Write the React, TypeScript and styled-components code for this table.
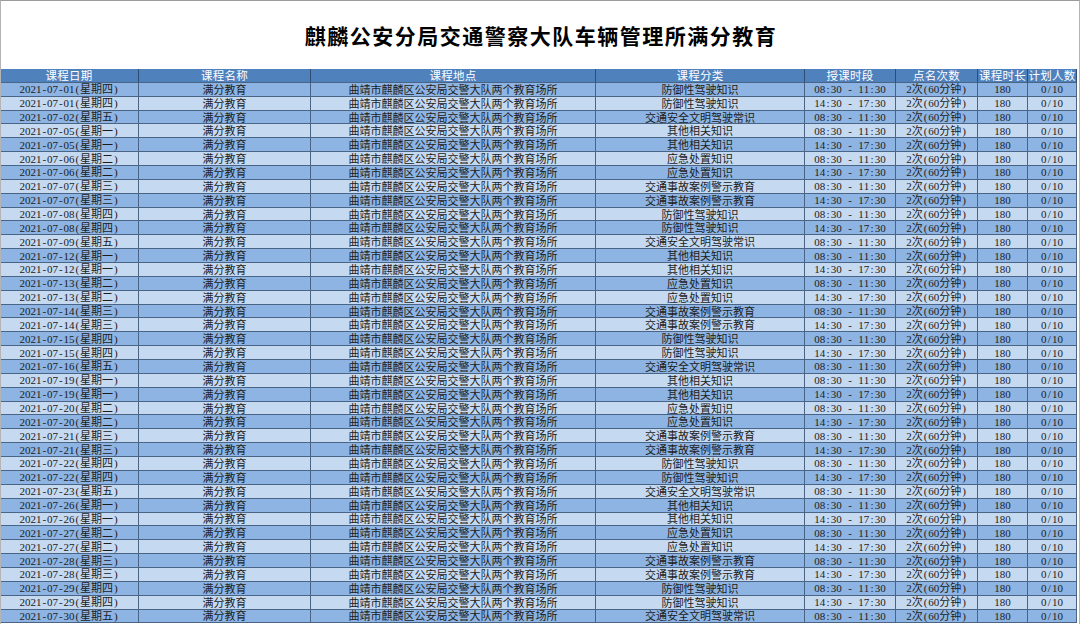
import React from "react";
import styled, { createGlobalStyle } from "styled-components";

const GlobalStyle = createGlobalStyle`
  html, body {
    margin: 0;
    padding: 0;
    background: #ffffff;
  }
`;

const Sheet = styled.div`
  width: 1080px;
  height: 624px;
  overflow: hidden;
  box-sizing: border-box;
  border-top: 1px solid #9c9c9c;
  border-left: 1px solid #b4b4b4;
  border-right: 1px solid #b4b4b4;
  background: #ffffff;
`;

const Title = styled.div`
  height: 68px;
  display: flex;
  align-items: center;
  justify-content: center;
  font-family: "Noto Sans CJK SC", "Noto Sans", sans-serif;
  font-weight: 700;
  font-size: 21px;
  letter-spacing: 1.5px;
  color: #000000;
  padding-left: 2px;
`;

const Grid = styled.div`
  display: grid;
  grid-template-columns: 139px 172px 285px 209px 91px 82px 50px 49px;
  grid-auto-rows: 13.87px;
  margin-left: -1px;
  width: 1077px;
  font-family: "Noto Sans CJK SC", sans-serif;
  font-size: 11px;
`;

const Cell = styled.div<{ $tone: "head" | "dark" | "light" }>`
  box-sizing: border-box;
  display: flex;
  align-items: center;
  justify-content: center;
  white-space: nowrap;
  line-height: 1;
  border-right: 1px solid ${(p) => (p.$tone === "head" ? "#2e4d74" : "#4a6486")};
  border-bottom: 1px solid #4a6486;
  color: ${(p) => (p.$tone === "head" ? "#ffffff" : "#1c1c1c")};
  background: ${(p) =>
    p.$tone === "head" ? "#4f81bd" : p.$tone === "dark" ? "#8db4e2" : "#c5d9f1"};
  font-size: ${(p) => (p.$tone === "head" ? "11.5px" : "11px")};
  letter-spacing: ${(p) => (p.$tone === "head" ? "0.3px" : "0")};
`;

// one half-width latin glyph, like the sheet's Song font
const Half = styled.span`
  display: inline-block;
  width: 5.5px;
  text-align: center;
  font-family: "Liberation Serif", serif;
  font-size: 11px;
`;

function Mixed({ text }: { text: string }) {
  return (
    <span>
      {Array.from(text).map((ch, i) =>
        ch.charCodeAt(0) < 128 ? (
          <Half key={i}>{ch === " " ? "\u00a0" : ch}</Half>
        ) : (
          <span key={i}>{ch}</span>
        )
      )}
    </span>
  );
}

const headers = [
  "课程日期",
  "课程名称",
  "课程地点",
  "课程分类",
  "授课时段",
  "点名次数",
  "课程时长",
  "计划人数",
];

const weekdays = ["", "一", "二", "三", "四", "五"];

type Course = [string, number, string, string];

const AM = "08:30 - 11:30";
const PM = "14:30 - 17:30";
const DEF = "防御性驾驶知识";
const SAFE = "交通安全文明驾驶常识";
const OTHER = "其他相关知识";
const EMER = "应急处置知识";
const CASE = "交通事故案例警示教育";

const plan: Course[] = [];
for (let i = 1; i <= 30; i++) {
  const d = `2021-07-${String(i).padStart(2, "0")}`;
  const dow = new Date(`${d}T00:00:00`).getDay();
  if (dow === 1) plan.push([d, dow, AM, OTHER], [d, dow, PM, OTHER]);
  else if (dow === 2) plan.push([d, dow, AM, EMER], [d, dow, PM, EMER]);
  else if (dow === 3) plan.push([d, dow, AM, CASE], [d, dow, PM, CASE]);
  else if (dow === 4) plan.push([d, dow, AM, DEF], [d, dow, PM, DEF]);
  else if (dow === 5) plan.push([d, dow, AM, SAFE]);
}

export default function App() {
  return (
    <>
      <GlobalStyle />
      <Sheet>
        <Title>麒麟公安分局交通警察大队车辆管理所满分教育</Title>
        <Grid>
          {headers.map((h) => (
            <Cell key={h} $tone="head">
              {h}
            </Cell>
          ))}
          {plan.map(([date, dow, time, kind], i) => {
            const tone = i % 2 === 0 ? "dark" : "light";
            const cells = [
              `${date}(星期${weekdays[dow]})`,
              "满分教育",
              "曲靖市麒麟区公安局交警大队两个教育场所",
              kind,
              time,
              "2次(60分钟)",
              "180",
              "0/10",
            ];
            return cells.map((c, j) => (
              <Cell key={`${i}-${j}`} $tone={tone}>
                <Mixed text={c} />
              </Cell>
            ));
          })}
        </Grid>
      </Sheet>
    </>
  );
}
